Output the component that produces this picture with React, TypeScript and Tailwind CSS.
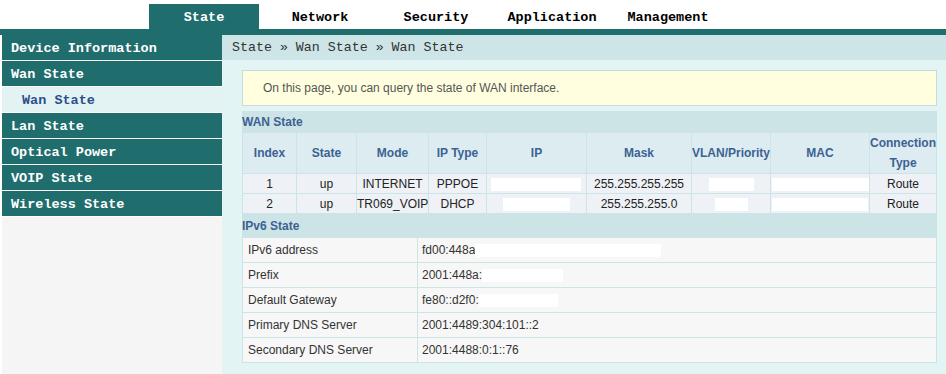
import React from "react";

const mono = { fontFamily: '"Liberation Mono", "DejaVu Sans Mono", monospace' };
const sans = { fontFamily: '"Liberation Sans", Arial, sans-serif' };

const tabs = ["State", "Network", "Security", "Application", "Management"];
const side = [
  { t: "Device Information", k: "main" },
  { t: "Wan State", k: "main" },
  { t: "Wan State", k: "sub" },
  { t: "Lan State", k: "main" },
  { t: "Optical Power", k: "main" },
  { t: "VOIP State", k: "main" },
  { t: "Wireless State", k: "main" },
];

function Blank({ w }: { w: string }) {
  return <span className={`inline-block h-[13px] bg-white align-middle ${w}`} />;
}

export default function App() {
  const th = "border border-[#cde4e6] bg-[#dcecf1] text-[#3d6193] font-bold text-[12px] leading-[20px] text-center p-0";
  const td = "border border-[#cde4e6] bg-[#eef1f5] text-[#222] text-[12px] text-center h-[20px] p-0 whitespace-nowrap";
  const ipv6 = [
    { l: "IPv6 address", v: "fd00:448a", b: "w-[186px]" },
    { l: "Prefix", v: "2001:448a:", b: "w-[81px]" },
    { l: "Default Gateway", v: "fe80::d2f0:", b: "w-[79px]" },
    { l: "Primary DNS Server", v: "2001:4489:304:101::2", b: "" },
    { l: "Secondary DNS Server", v: "2001:4488:0:1::76", b: "" },
  ];
  return (
    <div className="w-[946px] h-[374px] overflow-hidden bg-white" style={sans}>
      {/* top nav */}
      <div className="h-[29px] flex pl-[149px] gap-[6px] bg-white">
        {tabs.map((t, i) => (
          <div
            key={t}
            className={`w-[110px] mt-[4px] h-[25px] pt-[3px] flex items-center justify-center font-bold text-[13.5px] ${
              i === 0 ? "bg-[#1f6d6d] text-white" : "text-black"
            }`}
            style={mono}
          >
            {t}
          </div>
        ))}
      </div>
      <div className="h-[6px] bg-[#1f6d6d]" />
      <div className="flex h-[339px]">
        {/* sidebar */}
        <div className="w-[222px] flex flex-col bg-white">
          <div className="pl-[2px] flex flex-col">
            {side.map((s, i) =>
              s.k === "main" ? (
                <div
                  key={i}
                  className="h-[25px] mb-[1px] pt-[3px] bg-[#1f6d6d] text-white font-bold text-[13.5px] flex items-center pl-[9px]"
                  style={mono}
                >
                  {s.t}
                </div>
              ) : (
                <div
                  key={i}
                  className="h-[25px] mb-[1px] pt-[3px] bg-[#e3f3f3] text-[#2b4f8c] font-bold text-[13.5px] flex items-center pl-[20px]"
                  style={mono}
                >
                  {s.t}
                </div>
              )
            )}
          </div>
          <div className="flex-1 ml-[2px] bg-[#f5f5f5]" />
        </div>
        {/* content */}
        <div className="flex-1 bg-[#e3f4f4] flex flex-col">
          <div
            className="h-[25px] bg-[#cde5e6] flex items-center pl-[10px] text-[13.3px] text-[#333]"
            style={mono}
          >
            State » Wan State » Wan State
          </div>
          <div className="pl-[20px] pr-[9px] pt-[10px]">
            <div className="h-[36px] border border-[#c4dae3] bg-[#ffffdf] flex items-center pl-[20px] text-[12px] text-[#555]">
              On this page, you can query the state of WAN interface.
            </div>
            <div className="mt-[5px] h-[21px] bg-[#cde4e6] flex items-center text-[12px] font-bold text-[#3d6193]">
              WAN State
            </div>
            <table className="table-fixed border-collapse w-[694px]">
              <thead>
                <tr className="h-[41px]">
                  <th className={`${th} w-[54px]`}>Index</th>
                  <th className={`${th} w-[60px]`}>State</th>
                  <th className={`${th} w-[72px]`}>Mode</th>
                  <th className={`${th} w-[58px]`}>IP Type</th>
                  <th className={`${th} w-[100px]`}>IP</th>
                  <th className={`${th} w-[105px]`}>Mask</th>
                  <th className={`${th} w-[79px]`}>VLAN/Priority</th>
                  <th className={`${th} w-[99px]`}>MAC</th>
                  <th className={`${th} w-[67px]`}>
                    Connection
                    <br />
                    Type
                  </th>
                </tr>
              </thead>
              <tbody>
                <tr>
                  <td className={td}>1</td>
                  <td className={td}>up</td>
                  <td className={td}>INTERNET</td>
                  <td className={td}>PPPOE</td>
                  <td className={`${td} text-left pl-[4px]`}>
                    <Blank w="w-[90px]" />
                  </td>
                  <td className={td}>255.255.255.255</td>
                  <td className={td}>
                    <Blank w="w-[45px]" />
                  </td>
                  <td className={`${td} text-left pl-[1px]`}>
                    <Blank w="w-[97px]" />
                  </td>
                  <td className={td}>Route</td>
                </tr>
                <tr>
                  <td className={td}>2</td>
                  <td className={td}>up</td>
                  <td className={td}>TR069_VOIP</td>
                  <td className={td}>DHCP</td>
                  <td className={td}>
                    <Blank w="w-[67px]" />
                  </td>
                  <td className={td}>255.255.255.0</td>
                  <td className={td}>
                    <Blank w="w-[33px]" />
                  </td>
                  <td className={`${td} text-left pl-[1px]`}>
                    <Blank w="w-[96px]" />
                  </td>
                  <td className={td}>Route</td>
                </tr>
              </tbody>
            </table>
            <div className="h-[23px] bg-[#cde4e6] flex items-center text-[12px] font-bold text-[#3d6193]">
              IPv6 State
            </div>
            <table className="table-fixed border-collapse w-[695px]">
              <tbody>
                {ipv6.map((r) => (
                  <tr key={r.l} className="h-[25px]">
                    <td className="w-[175px] border border-[#cde4e6] bg-[#f7f7f7] text-[12px] text-[#333] pl-[5px] p-0">
                      {r.l}
                    </td>
                    <td className="border border-[#cde4e6] bg-[#f7f7f7] text-[12px] text-[#333] pl-[4px] p-0 whitespace-nowrap">
                      {r.v}
                      {r.b && <Blank w={r.b} />}
                    </td>
                  </tr>
                ))}
              </tbody>
            </table>
          </div>
        </div>
      </div>
    </div>
  );
}
